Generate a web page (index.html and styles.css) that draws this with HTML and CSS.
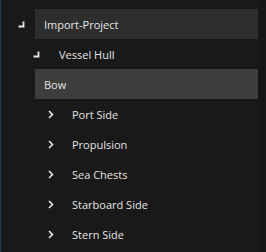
FILE: index.html
```html
<!DOCTYPE html>
<html lang="en">
<head>
  <meta charset="UTF-8"/>
  <title>Project Tree</title>
  <link rel="stylesheet" href="styles.css">
</head>
<body>
  <div class="tree">
    <div class="row root">
      <span class="twist"><svg width="7" height="7" viewBox="0 0 7 7"><path d="M5.5 0.5 V5.5 H0.5" fill="none" stroke="#e6e6e6" stroke-width="1.8"/></svg></span>
      <span class="label shaded">Import-Project</span>
    </div>
    <div class="row hull">
      <span class="twist"><svg width="7" height="7" viewBox="0 0 7 7"><path d="M5.5 0.5 V5.5 H0.5" fill="none" stroke="#e6e6e6" stroke-width="1.8"/></svg></span>
      <span class="label">Vessel Hull</span>
    </div>
    <div class="row sel">
      <span class="twist"></span>
      <span class="label selected">Bow</span>
    </div>
    <div class="row leaf">
      <span class="twist"><svg width="6" height="9" viewBox="0 0 6 9"><path d="M1 1 L4.5 4.5 L1 8" fill="none" stroke="#e6e6e6" stroke-width="1.6"/></svg></span>
      <span class="label">Port Side</span>
    </div>
    <div class="row leaf">
      <span class="twist"><svg width="6" height="9" viewBox="0 0 6 9"><path d="M1 1 L4.5 4.5 L1 8" fill="none" stroke="#e6e6e6" stroke-width="1.6"/></svg></span>
      <span class="label">Propulsion</span>
    </div>
    <div class="row leaf">
      <span class="twist"><svg width="6" height="9" viewBox="0 0 6 9"><path d="M1 1 L4.5 4.5 L1 8" fill="none" stroke="#e6e6e6" stroke-width="1.6"/></svg></span>
      <span class="label">Sea Chests</span>
    </div>
    <div class="row leaf">
      <span class="twist"><svg width="6" height="9" viewBox="0 0 6 9"><path d="M1 1 L4.5 4.5 L1 8" fill="none" stroke="#e6e6e6" stroke-width="1.6"/></svg></span>
      <span class="label">Starboard Side</span>
    </div>
    <div class="row leaf">
      <span class="twist"><svg width="6" height="9" viewBox="0 0 6 9"><path d="M1 1 L4.5 4.5 L1 8" fill="none" stroke="#e6e6e6" stroke-width="1.6"/></svg></span>
      <span class="label">Stern Side</span>
    </div>
  </div>
</body>
</html>
```
FILE: styles.css
```css
* {
  box-sizing: border-box;
}

body {
  margin: 0;
  width: 266px;
  height: 252px;
  background: #161616;
  font-family: 'Open Sans', 'Noto Sans', sans-serif;
  font-size: 11px;
  color: #e4e4e4;
  overflow: hidden;
}

.tree {
  height: 100%;
  width: 258px;
  padding-top: 9px;
  background: #191919;
  border-left: 1px solid #1d3a5c;
}

.row {
  display: flex;
  align-items: stretch;
  height: 30px;
}

.twist {
  display: flex;
  align-items: center;
  flex-shrink: 0;
  width: 34px;
}

.twist svg {
  display: block;
}

.label {
  flex: 1;
  display: flex;
  align-items: center;
  padding-left: 9px;
  white-space: nowrap;
}

.label.shaded {
  background: #2e2e2e;
}

.label.selected {
  background: #3d3d3d;
}

.root .twist {
  padding-left: 17px;
}

.hull .twist {
  width: 49px;
  padding-left: 32px;
}

.leaf .twist {
  width: 62px;
  padding-left: 47px;
}
```
